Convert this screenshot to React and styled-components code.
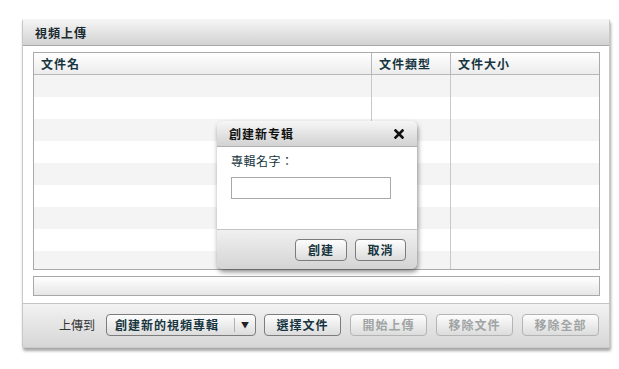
import React from "react";
import styled, { createGlobalStyle } from "styled-components";

const Global = createGlobalStyle`
  html, body { margin: 0; padding: 0; background: #fff; }
  body { font-family: "Noto Sans CJK TC", "Noto Sans CJK SC", sans-serif; font-size: 12px; color: #163540; }
`;

const Page = styled.div`
  position: relative;
  width: 619px;
  height: 369px;
  padding: 19px 0 0 22px;
  box-sizing: border-box;
`;

const Panel = styled.div`
  width: 588px;
  border: 1px solid #c8c8c8;
  border-top: none;
  border-radius: 2px;
  box-sizing: border-box;
  background: #fff;
  box-shadow: 1px 3px 3px rgba(0, 0, 0, 0.35);
  display: flex;
  flex-direction: column;
`;

const Header = styled.div`
  height: 27px;
  box-sizing: border-box;
  display: flex;
  align-items: center;
  padding-left: 12px;
  background: linear-gradient(#f6f6f6, #d2d2d2);
  border-bottom: 1px solid #a8a8a8;
  font-weight: 700;
  letter-spacing: 1px;
  color: #1a2a30;
`;

const Body = styled.div`
  padding: 6px 9px 7px 10px;
  display: flex;
  flex-direction: column;
  gap: 6px;
`;

const Table = styled.div`
  height: 218px;
  border: 1px solid #aaa;
  box-sizing: border-box;
  display: grid;
  grid-template-columns: 337px 79px 1fr;
  grid-template-rows: 22px repeat(9, 22px);
  overflow: hidden;
`;

const HeadCell = styled.div`
  display: flex;
  align-items: center;
  padding-left: 7px;
  font-weight: 700;
  letter-spacing: 1px;
  background: linear-gradient(#ffffff, #ececec);
  border-bottom: 1px solid #b8b8b8;
  border-left: ${(p) => (p.$first ? "none" : "1px solid #b8b8b8")};
`;

const Cell = styled.div`
  background: ${(p) => (p.$odd ? "#f4f4f4" : "#fff")};
  border-left: ${(p) => (p.$first ? "none" : "1px solid #c8c8c8")};
`;

const Progress = styled.div`
  height: 20px;
  border: 1px solid #a8a8a8;
  box-sizing: border-box;
  background: linear-gradient(#ffffff, #e6e6e6);
`;

const Footer = styled.div`
  height: 44px;
  box-sizing: border-box;
  border-top: 1px solid #c4c4c4;
  background: linear-gradient(#f2f2f2, #d6d6d6);
  display: flex;
  align-items: center;
  justify-content: flex-end;
  padding: 0 10px 2px 0;
  gap: 9px;
`;

const Label = styled.span`
  color: #333;
  margin-right: 2px;
`;

const Button = styled.button`
  width: ${(p) => p.$w || 77}px;
  height: 22px;
  padding: 0;
  border: 1px solid ${(p) => (p.disabled ? "#b4b4b4" : "#7c7c7c")};
  border-radius: 4px;
  background: linear-gradient(#fdfdfd, #dcdcdc);
  font-family: inherit;
  font-size: 12px;
  font-weight: 700;
  letter-spacing: 1px;
  color: ${(p) => (p.disabled ? "#a0a4a4" : "#163540")};
  display: flex;
  align-items: center;
  justify-content: center;
`;

const Select = styled.div`
  width: 150px;
  height: 22px;
  box-sizing: border-box;
  border: 1px solid #7c7c7c;
  border-radius: 4px;
  background: linear-gradient(#fdfdfd, #dcdcdc);
  display: flex;
  align-items: center;
  margin-right: -1px;
`;

const SelectText = styled.span`
  flex: 1;
  padding-left: 8px;
  font-weight: 700;
  letter-spacing: 1px;
`;

const SelectArrow = styled.span`
  width: 20px;
  height: 14px;
  border-left: 1px solid #b0b0b0;
  display: flex;
  align-items: center;
  justify-content: center;
  font-size: 8px;
  color: #222;
`;

const Dialog = styled.div`
  position: absolute;
  left: 217px;
  top: 121px;
  width: 200px;
  height: 148px;
  border-radius: 6px;
  overflow: hidden;
  box-shadow: 1px 3px 5px rgba(0, 0, 0, 0.45);
  display: flex;
  flex-direction: column;
`;

const DialogTitle = styled.div`
  height: 26px;
  box-sizing: border-box;
  padding: 0 13px 0 12px;
  display: flex;
  align-items: center;
  justify-content: space-between;
  background: linear-gradient(#f6f6f6, #d2d2d2);
  border-bottom: 1px solid #b0b0b0;
  font-weight: 700;
  letter-spacing: 1px;
  color: #111;
`;

const CloseIcon = styled.svg`
  width: 10px;
  height: 10px;
  display: block;
`;

const DialogBody = styled.div`
  height: 82px;
  box-sizing: border-box;
  background: #fff;
  padding: 5px 0 0 14px;
  display: flex;
  flex-direction: column;
  gap: 8px;
`;

const FieldLabel = styled.span`
  color: #163540;
  letter-spacing: 0.5px;
`;

const Input = styled.div`
  width: 160px;
  height: 22px;
  box-sizing: border-box;
  border: 1px solid #a8a8a8;
  background: #fff;
`;

const DialogFooter = styled.div`
  flex: 1;
  border-top: 1px solid #c4c4c4;
  background: linear-gradient(#f0f0f0, #d4d4d4);
  display: flex;
  align-items: center;
  justify-content: flex-end;
  padding: 0 11px 0 0;
  gap: 8px;
`;

const rows = Array.from({ length: 9 });

export default function App() {
  return (
    <Page>
      <Global />
      <Panel>
        <Header>視頻上傳</Header>
        <Body>
          <Table>
            <HeadCell $first>文件名</HeadCell>
            <HeadCell>文件類型</HeadCell>
            <HeadCell>文件大小</HeadCell>
            {rows.map((_, i) => (
              <React.Fragment key={i}>
                <Cell $first $odd={i % 2 === 0} />
                <Cell $odd={i % 2 === 0} />
                <Cell $odd={i % 2 === 0} />
              </React.Fragment>
            ))}
          </Table>
          <Progress />
        </Body>
        <Footer>
          <Label>上傳到</Label>
          <Select>
            <SelectText>創建新的視頻專輯</SelectText>
            <SelectArrow>▼</SelectArrow>
          </Select>
          <Button>選擇文件</Button>
          <Button disabled>開始上傳</Button>
          <Button disabled>移除文件</Button>
          <Button disabled>移除全部</Button>
        </Footer>
      </Panel>
      <Dialog>
        <DialogTitle>
          <span>創建新专辑</span>
          <CloseIcon viewBox="0 0 10 10">
            <path d="M1.5 1.5 L8.5 8.5 M8.5 1.5 L1.5 8.5" stroke="#111" strokeWidth="2.6" strokeLinecap="square" />
          </CloseIcon>
        </DialogTitle>
        <DialogBody>
          <FieldLabel>專輯名字：</FieldLabel>
          <Input />
        </DialogBody>
        <DialogFooter>
          <Button $w={52}>創建</Button>
          <Button $w={51}>取消</Button>
        </DialogFooter>
      </Dialog>
    </Page>
  );
}
